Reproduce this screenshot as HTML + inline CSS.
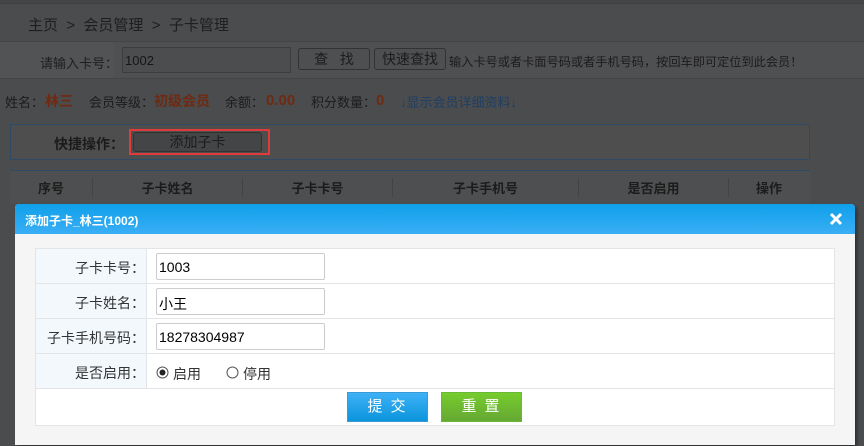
<!DOCTYPE html>
<html><head><meta charset="utf-8"><style>
*{margin:0;padding:0;box-sizing:border-box}
body{width:864px;height:446px;overflow:hidden;background:#4b4c4e;font-family:"Liberation Sans","Noto Sans CJK SC",sans-serif;font-size:13px;color:#1c1c1c;position:relative}
.a{position:absolute;white-space:nowrap}
.o{color:#6e2a12;font-weight:bold;font-size:14px}
</style></head><body>
<div class="a" style="left:0;top:0;width:864px;height:4px;background:#444547;border-bottom:1px solid #3e3f41"></div>
<div class="a" style="left:28px;top:14px;font-size:15px;color:#1e1e1e">主页 &nbsp;&gt;&nbsp; 会员管理 &nbsp;&gt;&nbsp; 子卡管理</div>
<div class="a" style="left:0;top:41px;width:864px;height:38px;background:#4f5052;border-top:1px solid #444;border-bottom:1px solid #444"></div>
<div class="a" style="left:0;top:42px;width:114px;height:36px;background:#525355"></div>
<div class="a" style="left:40px;top:53px;color:#1e1e1e">请输入卡号：</div>
<div class="a" style="left:122px;top:47px;width:169px;height:26px;border:1px solid #3c3d3f;background:#4c4d4f;padding:5px 2px;color:#161616">1002</div>
<div class="a" style="left:298px;top:48px;width:72px;height:22px;border:1px solid #333;border-radius:3px;background:#4e4f51;text-align:center;line-height:20px;font-size:14px">查 &nbsp; 找</div>
<div class="a" style="left:374px;top:48px;width:72px;height:22px;border:1px solid #333;border-radius:3px;background:#4e4f51;text-align:center;line-height:20px;font-size:14px">快速查找</div>
<div class="a" style="left:449px;top:52px;font-size:12.2px">输入卡号或者卡面号码或者手机号码，按回车即可定位到此会员！</div>
<div class="a" style="left:5px;top:92px">姓名：</div>
<div class="a o" style="left:45px;top:91px">林三</div>
<div class="a" style="left:89px;top:92px">会员等级：</div>
<div class="a o" style="left:154px;top:91px">初级会员</div>
<div class="a" style="left:225px;top:92px">余额：</div>
<div class="a o" style="left:266px;top:92px;font-size:15px">0.00</div>
<div class="a" style="left:311px;top:92px">积分数量：</div>
<div class="a o" style="left:376px;top:92px;font-size:15px">0</div>
<div class="a" style="left:400px;top:92px;color:#1e3f66">↓显示会员详细资料↓</div>
<div class="a" style="left:10px;top:124px;width:800px;height:36px;border:1px solid #2d4a66;background:#4e4e4f"></div>
<div class="a" style="left:54px;top:134px;font-weight:bold;font-size:14px">快捷操作：</div>
<div class="a" style="left:129px;top:129px;width:141px;height:26px;border:2px solid #e03a3a"></div>
<div class="a" style="left:133px;top:132px;width:129px;height:20px;border:1px solid #333;border-radius:3px;background:#444547;text-align:center;line-height:18px;font-size:14px">添加子卡</div>
<div class="a" style="left:10px;top:170px;width:800px;height:34px;border-top:1px solid #2d4a66;background:#4e4f51"></div>
<div class="a" style="left:10px;top:178px;width:82px;text-align:center;font-weight:bold">序号</div>
<div class="a" style="left:92px;top:178px;width:150px;text-align:center;font-weight:bold;border-left:1px solid #444">子卡姓名</div>
<div class="a" style="left:242px;top:178px;width:150px;text-align:center;font-weight:bold;border-left:1px solid #444">子卡卡号</div>
<div class="a" style="left:392px;top:178px;width:186px;text-align:center;font-weight:bold;border-left:1px solid #444">子卡手机号</div>
<div class="a" style="left:578px;top:178px;width:150px;text-align:center;font-weight:bold;border-left:1px solid #444">是否启用</div>
<div class="a" style="left:728px;top:178px;width:81px;text-align:center;font-weight:bold;border-left:1px solid #444">操作</div>

<div class="a" style="left:15px;top:204px;width:840px;height:241px;background:#f5f5f5;border-radius:4px 4px 0 0;box-shadow:2px 2px 3px rgba(0,0,0,.4)"></div>
<div class="a" style="left:15px;top:204px;width:840px;height:30px;background:linear-gradient(#0ea0ea,#3aaef5);border-radius:4px 4px 0 0"></div>
<div class="a" style="left:25px;top:212px;color:#fff;font-weight:bold;font-size:12px">添加子卡_林三(1002)</div>
<svg class="a" style="left:829px;top:212px" width="14" height="14" viewBox="0 0 14 14"><path d="M2 2L12 12M12 2L2 12" stroke="#fff" stroke-width="3"/></svg>
<div class="a" style="left:35px;top:248px;width:800px;height:178px;background:#fff;border:1px solid #e2e4e7"></div>
<div class="a" style="left:36px;top:249px;width:111px;height:139px;background:#f3f8fd;border-right:1px solid #e2e4e7"></div>
<div class="a" style="left:36px;top:283px;width:798px;border-top:1px solid #e2e4e7"></div>
<div class="a" style="left:36px;top:318px;width:798px;border-top:1px solid #e2e4e7"></div>
<div class="a" style="left:36px;top:353px;width:798px;border-top:1px solid #e2e4e7"></div>
<div class="a" style="left:36px;top:388px;width:798px;border-top:1px solid #e2e4e7"></div>
<div class="a" style="left:36px;top:258px;width:109px;text-align:right;font-size:14px;color:#333">子卡卡号：</div>
<div class="a" style="left:36px;top:293px;width:109px;text-align:right;font-size:14px;color:#333">子卡姓名：</div>
<div class="a" style="left:36px;top:328px;width:109px;text-align:right;font-size:14px;color:#333">子卡手机号码：</div>
<div class="a" style="left:36px;top:363px;width:109px;text-align:right;font-size:14px;color:#333">是否启用：</div>
<div class="a" style="left:156px;top:253px;width:169px;height:27px;border:1px solid #ccc;border-radius:2px;padding:5px 2px;font-size:14px;color:#000">1003</div>
<div class="a" style="left:156px;top:288px;width:169px;height:27px;border:1px solid #ccc;border-radius:2px;padding:5px 2px;font-size:14px;color:#000">小王</div>
<div class="a" style="left:156px;top:323px;width:169px;height:27px;border:1px solid #ccc;border-radius:2px;padding:5px 2px;font-size:14px;color:#000">18278304987</div>
<svg class="a" style="left:156px;top:366px" width="13" height="13"><circle cx="6.5" cy="6.5" r="5.5" fill="#fff" stroke="#555"/><circle cx="6.5" cy="6.5" r="3" fill="#222"/></svg>
<div class="a" style="left:173px;top:364px;font-size:14px;color:#333">启用</div>
<svg class="a" style="left:226px;top:366px" width="13" height="13"><circle cx="6.5" cy="6.5" r="5.5" fill="#fff" stroke="#555"/></svg>
<div class="a" style="left:243px;top:364px;font-size:14px;color:#333">停用</div>
<div class="a" style="left:347px;top:392px;width:81px;height:30px;background:linear-gradient(#3fb1f6,#0a95dc);border:1px solid #3a9ad6;color:#fff;text-align:center;line-height:28px;font-size:15px;letter-spacing:8px;padding-left:6px">提交</div>
<div class="a" style="left:441px;top:392px;width:81px;height:30px;background:linear-gradient(#76cc2d,#65a833);border:1px solid #6ab838;color:#fff;text-align:center;line-height:28px;font-size:15px;letter-spacing:8px;padding-left:6px">重置</div>
</body></html>
